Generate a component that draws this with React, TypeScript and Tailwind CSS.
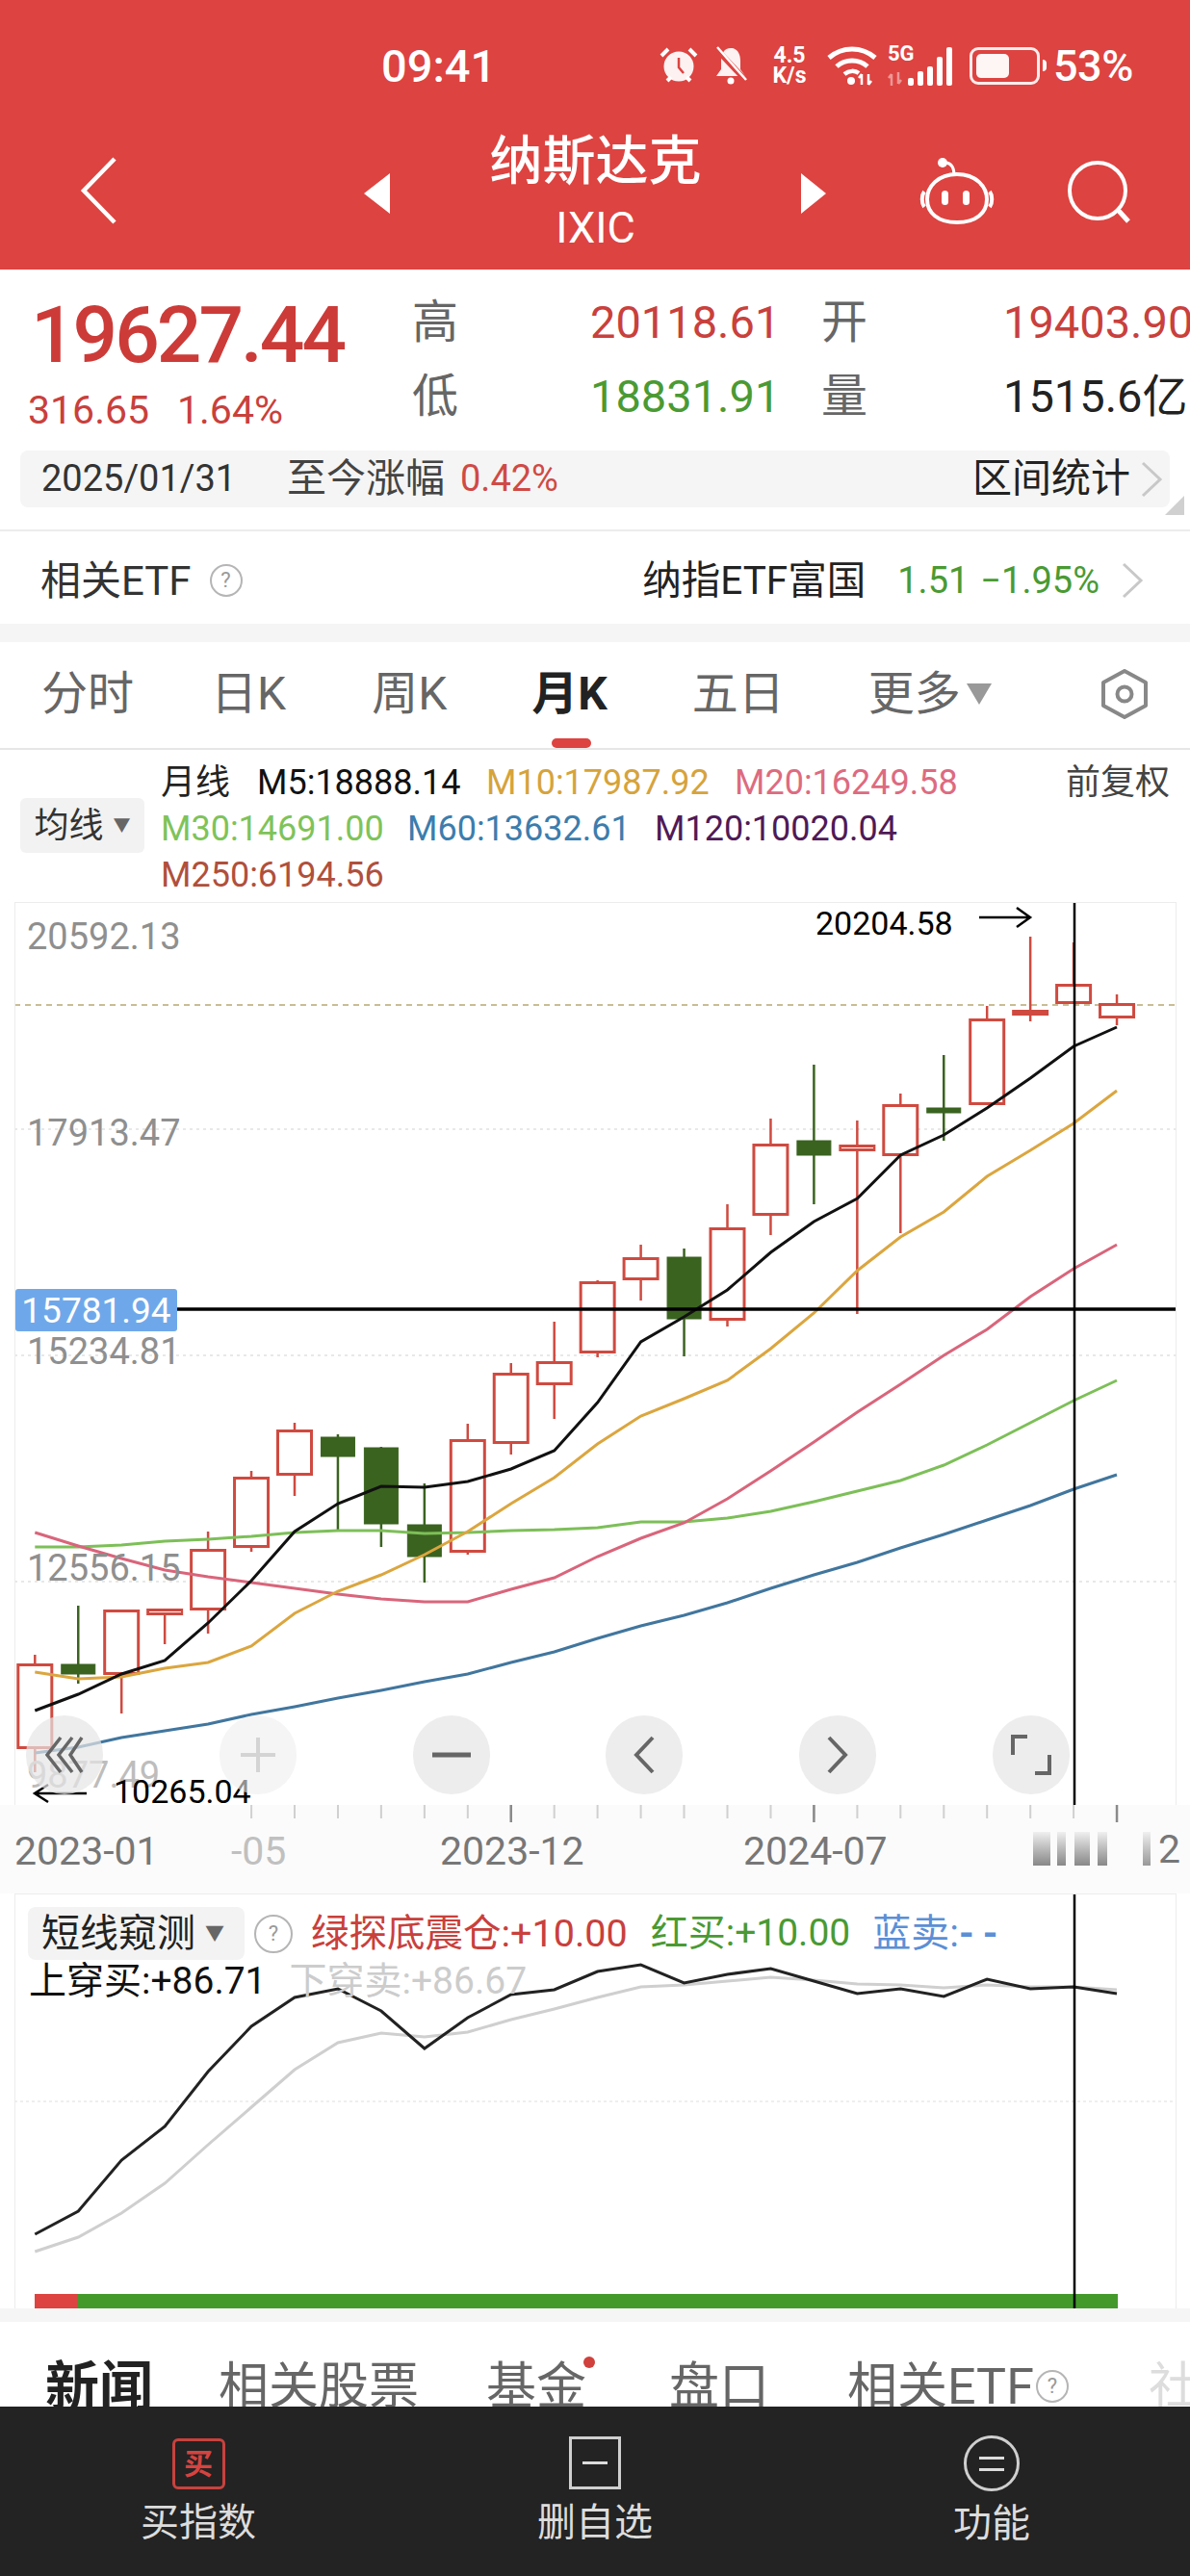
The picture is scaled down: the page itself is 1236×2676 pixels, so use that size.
import React from "react";

const xAt = (i: number) => 36.3 + i * 44.95;
const pts = (ys: number[]) => ys.map((y, i) => `${xAt(i).toFixed(1)},${y}`).join(" ");

// [wickTop, bodyTop, bodyBottom, wickBottom, isRed]
const candles: [number, number, number, number, boolean][] = [
  [1718, 1727, 1816, 1840, true],
  [1667, 1728, 1738, 1748, false],
  [1671, 1671, 1739, 1779, true],
  [1670, 1670, 1677, 1707, true],
  [1590, 1608, 1672, 1696, true],
  [1527, 1533, 1607, 1611, true],
  [1477, 1484, 1532, 1553, true],
  [1489, 1492, 1512, 1588, false],
  [1502, 1503, 1582, 1606, false],
  [1540, 1583, 1616, 1643, false],
  [1478, 1494, 1612, 1614, true],
  [1415, 1425, 1499, 1510, true],
  [1372, 1413, 1438, 1473, true],
  [1329, 1330, 1405, 1409, true],
  [1292, 1305, 1329, 1350, true],
  [1296, 1305, 1369, 1408, false],
  [1250, 1274, 1371, 1377, true],
  [1161, 1187, 1262, 1282, true],
  [1105, 1184, 1199, 1250, false],
  [1163, 1188, 1195, 1364, true],
  [1135, 1146, 1200, 1280, true],
  [1095, 1150, 1155, 1184, false],
  [1044, 1057, 1147, 1147, true],
  [972, 1048, 1054, 1060, true],
  [978, 1021, 1042, 1042, true],
  [1032, 1041, 1057, 1064, true],
];

const ma5 = [1776, 1759, 1738, 1724, 1685, 1641, 1590, 1561, 1543, 1544, 1538, 1525, 1506, 1456, 1393, 1367, 1339, 1300, 1268, 1244, 1199, 1178, 1150, 1119, 1086, 1066];
const ma10 = [1736, 1743, 1741, 1732, 1726, 1709, 1675, 1652, 1635, 1614, 1590, 1561, 1534, 1499, 1470, 1452, 1433, 1400, 1363, 1319, 1284, 1258, 1221, 1194, 1166, 1132];
const ma20 = [1591, 1605, 1618, 1630, 1637, 1643, 1649, 1655, 1660, 1663, 1663, 1650, 1638, 1616, 1597, 1581, 1556, 1527, 1497, 1466, 1437, 1407, 1380, 1346, 1317, 1292];
const ma30 = [1606, 1606, 1604, 1600, 1598, 1595, 1591, 1589, 1589, 1592, 1591, 1589, 1588, 1586, 1580, 1580, 1576, 1569, 1559, 1548, 1537, 1521, 1500, 1477, 1454, 1433];
const ma60 = [1820, 1814, 1804, 1797, 1790, 1780, 1772, 1763, 1755, 1746, 1738, 1726, 1715, 1701, 1688, 1677, 1664, 1649, 1635, 1622, 1607, 1593, 1578, 1563, 1546, 1531];
const oscBlack = [2320, 2296, 2243, 2208, 2151, 2104, 2074, 2065, 2088, 2127, 2095, 2071, 2066, 2047, 2040, 2059, 2050, 2044, 2057, 2070, 2065, 2073, 2055, 2065, 2063, 2070];
const oscGray = [2338, 2323, 2298, 2267, 2227, 2188, 2149, 2121, 2111, 2115, 2110, 2097, 2086, 2074, 2063, 2061, 2057, 2053, 2056, 2060, 2061, 2064, 2061, 2063, 2063, 2066];

const StatusIcons = () => (
  <div className="flex items-center text-white">
    <svg width="42" height="42" viewBox="0 0 42 42">
      <circle cx="21" cy="22" r="15.5" fill="#fff" fillOpacity="0.93" />
      <path d="M21 13v10l5 6" stroke="#dd4340" strokeWidth="2.5" fill="none" />
      <path d="M3 11 10 4M39 11 32 4M9 37l4-4M33 37l-4-4" stroke="#fff" strokeWidth="4" />
    </svg>
    <svg width="38" height="42" viewBox="0 0 38 42" className="ml-[14px]">
      <path d="M19 3c7 0 10 6 10 13v9l5 7H4l5-7v-9C9 9 12 3 19 3Z" fill="#fff" fillOpacity="0.93" />
      <circle cx="19" cy="37" r="3.5" fill="#fff" />
      <path d="M3 3l32 34" stroke="#dd4340" strokeWidth="6" />
      <path d="M5 2l30 34" stroke="#fff" strokeWidth="2.5" />
    </svg>
    <div className="ml-[20px] flex w-[44px] flex-col items-center text-[23px] font-bold leading-[21px]">
      <span>4.5</span>
      <span>K/s</span>
    </div>
    <svg width="52" height="42" viewBox="0 0 52 42" className="ml-[17px]">
      <path d="M2 13C16 1 36 1 50 13" stroke="#fff" strokeWidth="5" fill="none" />
      <path d="M10 22C19 14 33 14 42 22" stroke="#fff" strokeWidth="5" fill="none" />
      <path d="M18 30c5-4 11-4 15-1" stroke="#fff" strokeWidth="4.5" fill="none" />
      <circle cx="25" cy="37" r="4" fill="#fff" />
      <path d="M36 30v11M33 34l3-4M43 30v11M46 37l-3 4" stroke="#fff" strokeWidth="2.5" fill="none" />
    </svg>
    <div className="relative ml-[11px] flex h-[42px] w-[67px] items-end justify-end gap-[4px]">
      <span className="absolute left-0 top-[-3px] text-[22px] font-bold leading-[24px]">5G</span>
      <svg width="16" height="14" viewBox="0 0 16 14" className="absolute bottom-0 left-0">
        <path d="M4 14V2M1 6l3-4M11 0V12M14 8l-3 4" stroke="#fff" strokeOpacity="0.45" strokeWidth="2.5" fill="none" />
      </svg>
      <div className="h-[8px] w-[6px] rounded-[2px] bg-white" />
      <div className="h-[15px] w-[6px] rounded-[2px] bg-white" />
      <div className="h-[20px] w-[6px] rounded-[2px] bg-white" />
      <div className="h-[30px] w-[6px] rounded-[2px] bg-white" />
      <div className="h-[40px] w-[6px] rounded-[2px] bg-white" />
    </div>
    <div className="ml-[18px] flex h-[39px] w-[73px] items-center rounded-[9px] border-[3px] border-white/90 p-[4px]">
      <div className="h-full w-[34px] rounded-[5px] bg-white/95" />
    </div>
    <div className="ml-[3px] h-[12px] w-[4px] rounded-r bg-white" />
    <span className="ml-[7px] text-[45px] font-medium leading-none tracking-[-0.5px]">53%</span>
  </div>
);

const Robot = () => (
  <svg width="78" height="72" viewBox="0 0 78 72" className="ml-[97px]">
    <circle cx="24" cy="6" r="5" fill="#fff" />
    <path d="M28 6c6 1 8 6 8 13" stroke="#fff" strokeWidth="3" fill="none" />
    <path d="M39 18c20 0 31 13 31 26 0 14-11 24-31 24S8 58 8 44c0-13 11-26 31-26Z" stroke="#fff" strokeWidth="4" fill="none" />
    <path d="M5 36c-3 4-3 12 0 16M73 36c3 4 3 12 0 16" stroke="#fff" strokeWidth="4" fill="none" />
    <rect x="23" y="35" width="7" height="15" rx="3.5" fill="#fff" />
    <rect x="45" y="35" width="7" height="15" rx="3.5" fill="#fff" />
  </svg>
);

const Chevron = ({ className }: { className: string }) => (
  <svg width="24" height="38" viewBox="0 0 24 38" className={className}>
    <path d="M3 2 21 19 3 36" stroke="#c8c8c8" strokeWidth="3" fill="none" />
  </svg>
);

const Help = ({ className }: { className: string }) => (
  <span className={`flex h-[34px] w-[34px] shrink-0 items-center justify-center rounded-full border-2 border-[#b5b5b5] text-[22px] leading-none text-[#9a9a9a] ${className}`}>?</span>
);

const Candles = () => (
  <>
    {candles.map(([wt, bt, bb, wb, red], i) => {
      const x = xAt(i);
      const c = red ? "#cf4a40" : "#3b6320";
      return (
        <g key={i}>
          <path d={`M${x} ${wt}V${bt}M${x} ${bb}V${wb}`} stroke={c} strokeWidth="2.5" />
          <rect x={x - 17.5} y={bt + (red ? 1.5 : 0)} width="35" height={bb - bt - (red ? 3 : 0)} fill={red ? "#fff" : c} stroke={c} strokeWidth={red ? 3 : 1} />
        </g>
      );
    })}
  </>
);

const PriceLabel = ({ text, className }: { text: string; className: string }) => (
  <span className={`absolute left-[12px] text-[38px] leading-[44px] text-[#8f8f8f] ${className}`}>{text}</span>
);

const RoundButton = ({ children, className = "" }: { children: React.ReactNode; className?: string }) => (
  <div className={`flex h-[82px] w-[80px] items-center justify-center rounded-full bg-[#e6e6e6]/70 ${className}`}>{children}</div>
);

const KChart = () => (
  <div className="relative ml-[15px] h-[938px] w-[1207px] overflow-hidden border-x border-t border-[#ececec] bg-white">
    <svg width="1207" height="938" viewBox="16 937 1207 938" className="absolute left-0 top-0">
      <path d="M15 1043H1222" stroke="#c9bd94" strokeWidth="2" strokeDasharray="6 5" />
      <path d="M15 1172H1222M15 1407H1222M15 1642H1222" stroke="#e8e8e8" strokeWidth="2" strokeDasharray="3 4" />
      <Candles />
      <polyline points={pts(ma60)} fill="none" stroke="#41769e" strokeWidth="3" />
      <polyline points={pts(ma30)} fill="none" stroke="#7dbf58" strokeWidth="3" />
      <polyline points={pts(ma20)} fill="none" stroke="#d9657b" strokeWidth="3" />
      <polyline points={pts(ma10)} fill="none" stroke="#dba63f" strokeWidth="3" />
      <polyline points={pts(ma5)} fill="none" stroke="#111" strokeWidth="3" />
      <path d="M1116 937V1875" stroke="#000" strokeWidth="2.5" />
      <path d="M183 1359H1222" stroke="#000" strokeWidth="3.5" />
      <path d="M1017 952H1070M1056 942l14 10-14 10" stroke="#000" strokeWidth="2.5" fill="none" />
      <path d="M90 1862H38M50 1853l-14 9 14 9" stroke="#000" strokeWidth="2.5" fill="none" />
    </svg>
    <PriceLabel text="20592.13" className="top-[13px]" />
    <PriceLabel text="17913.47" className="top-[217px]" />
    <PriceLabel text="15234.81" className="top-[444px]" />
    <PriceLabel text="12556.15" className="top-[669px]" />
    <PriceLabel text="9877.49" className="top-[884px] text-[#bdbdbd]" />
    <span className="absolute left-[831px] top-[2px] text-[34px] leading-[38px] text-black">20204.58</span>
    <span className="absolute left-[102px] top-[904px] text-[34px] leading-[38px] text-black">10265.04</span>
    <span className="absolute left-0 top-[401px] flex h-[44px] w-[168px] items-center justify-center rounded-[3px] bg-[#6fa8ea] text-[37px] leading-none text-white">15781.94</span>
    <div className="absolute left-[11px] right-[110px] top-[844px] flex justify-between">
      <RoundButton>
        <svg width="48" height="48" viewBox="0 0 48 48"><path d="M20 6 6 24l14 18M32 6 18 24l14 18M42 6 30 24l12 18" stroke="#666" strokeWidth="3.5" fill="none" /></svg>
      </RoundButton>
      <RoundButton className="bg-[#eeeeee]/60">
        <svg width="40" height="40" viewBox="0 0 40 40"><path d="M20 2V38M2 20H38" stroke="#d4d4d4" strokeWidth="4" /></svg>
      </RoundButton>
      <RoundButton>
        <svg width="40" height="8" viewBox="0 0 40 8"><path d="M0 4H40" stroke="#666" strokeWidth="5" /></svg>
      </RoundButton>
      <RoundButton>
        <svg width="22" height="40" viewBox="0 0 22 40"><path d="M20 2 3 20l17 18" stroke="#666" strokeWidth="4" fill="none" /></svg>
      </RoundButton>
      <RoundButton>
        <svg width="22" height="40" viewBox="0 0 22 40"><path d="M2 2l17 18L2 38" stroke="#666" strokeWidth="4" fill="none" /></svg>
      </RoundButton>
      <RoundButton>
        <svg width="44" height="44" viewBox="0 0 44 44"><path d="M18 3H3V22M26 41H41V22" stroke="#666" strokeWidth="4" fill="none" /></svg>
      </RoundButton>
    </div>
  </div>
);

const TimeAxis = () => (
  <div className="relative h-[92px] bg-[#fbfbfb]">
    <svg width="1236" height="20" viewBox="0 0 1236 20" className="absolute left-0 top-0">
      <path d={Array.from({ length: 21 }, (_, k) => `M${xAt(k + 5).toFixed(1)} 0V14`).join("")} stroke="#d0d0d0" strokeWidth="2" />
      <path d={`M${xAt(11)} 0V18M${xAt(18)} 0V18M${xAt(25)} 0V18`} stroke="#8a8a8a" strokeWidth="2.5" />
    </svg>
    <div className="flex pl-[15px] pt-[26px] text-[41px] leading-[44px] text-[#777]">
      <span className="w-[225px]">2023-01</span>
      <span className="w-[217px] text-[#c0c0c0]">-05</span>
      <span className="w-[315px]">2023-12</span>
      <span className="w-[301px]">2024-07</span>
      <div className="mt-[2px] flex h-[35px] items-stretch">
        <div className="w-[18px] bg-gradient-to-b from-[#f0f0f0] to-[#888]" />
        <div className="ml-[7px] w-[9px] bg-gradient-to-b from-[#f0f0f0] to-[#888]" />
        <div className="ml-[9px] w-[16px] bg-gradient-to-b from-[#f0f0f0] to-[#888]" />
        <div className="ml-[8px] w-[10px] bg-gradient-to-b from-[#f0f0f0] to-[#888]" />
        <div className="ml-[37px] w-[8px] bg-gradient-to-b from-[#f0f0f0] to-[#999]" />
      </div>
      <span className="ml-[8px] -translate-y-[2px]">2</span>
    </div>
  </div>
);

const OscPanel = () => (
  <div className="relative ml-[15px] h-[431px] w-[1207px] overflow-hidden border-x border-t border-[#ececec] bg-white">
    <svg width="1207" height="431" viewBox="16 1967 1207 431" className="absolute left-0 top-0">
      <path d="M15 2182H1222" stroke="#dddddd" strokeWidth="1" strokeDasharray="3 3" />
      <polyline points={pts(oscGray)} fill="none" stroke="#cfcfcf" strokeWidth="3" />
      <polyline points={pts(oscBlack)} fill="none" stroke="#222" strokeWidth="3" />
      <rect x="36" y="2382" width="45" height="16" fill="#dd4340" />
      <rect x="81" y="2382" width="1080" height="16" fill="#439a2b" />
      <path d="M1116 1967V2398" stroke="#000" strokeWidth="2.5" />
    </svg>
    <div className="relative flex items-start pl-[13px] pt-[13px]">
      <div className="flex h-[55px] w-[225px] items-center rounded-lg bg-[#f3f3f3] pl-[14px] text-[40px] leading-none text-[#222]">
        短线窥测
        <span className="ml-[10px] text-[20px] text-[#666]">▼</span>
      </div>
      <Help className="ml-[10px] mt-[8px] h-[40px] w-[40px]" />
      <span className="ml-[19px] text-[39.5px] leading-[55px] text-[#c9403c]">绿探底震仓:+10.00</span>
      <span className="ml-[24px] text-[39px] leading-[55px] text-[#4a9a33]">红买:+10.00</span>
      <span className="ml-[23px] text-[40px] leading-[55px] text-[#5b8fd6]">
        蓝卖:<span className="font-bold tracking-[9px]">--</span>
      </span>
    </div>
    <div className="relative flex pl-[14px] text-[39px] leading-[44px]">
      <span className="text-[#111]">上穿买:+86.71</span>
      <span className="ml-[24px] text-[#cccccc]">下穿卖:+86.67</span>
    </div>
  </div>
);

export default function App() {
  return (
    <div className="h-[2676px] w-[1236px] overflow-hidden bg-white font-[Roboto,'Noto_Sans_CJK_SC',sans-serif]">
      {/* header */}
      <div className="h-[280px] bg-[#dd4340] text-white">
        <div className="flex h-[136px] items-center">
          <span className="ml-[396px] w-[288px] text-[47px] font-medium leading-none">09:41</span>
          <StatusIcons />
        </div>
        <div className="flex h-[144px] items-start">
          <svg width="44" height="72" viewBox="0 0 44 72" className="ml-[81px] mt-[26px]">
            <path d="M38 3 6 36l32 33" stroke="#fff" strokeWidth="4.5" fill="none" />
          </svg>
          <div className="ml-[253px] mt-[44px] h-0 w-0 border-y-[21px] border-r-[27px] border-y-transparent border-r-white" />
          <div className="flex w-[427px] flex-col items-center">
            <span className="text-[55px] font-medium leading-[62px]">纳斯达克</span>
            <span className="mt-[14px] text-[45px] leading-[50px]">IXIC</span>
          </div>
          <div className="mt-[44px] h-0 w-0 border-y-[21px] border-l-[26px] border-y-transparent border-l-white" />
          <div className="mt-[27px]">
            <Robot />
          </div>
          <svg width="66" height="68" viewBox="0 0 66 68" className="ml-[75px] mt-[30px]">
            <circle cx="32" cy="32" r="29" stroke="#fff" strokeWidth="4" fill="none" />
            <path d="M54 53l10 11" stroke="#fff" strokeWidth="5" />
          </svg>
        </div>
      </div>

      {/* quote */}
      <div className="flex h-[188px]">
        <div className="w-[428px] pl-[32px] pt-[16px]">
          <div className="text-[82px] font-medium leading-[104px] tracking-[-3px] text-[#cc3b38]">19627.44</div>
          <div className="flex pt-[3px] text-[41px] leading-[46px] text-[#c9403c]">
            <span className="-ml-[3px] w-[155px]">316.65</span>
            <span>1.64%</span>
          </div>
        </div>
        <div className="grid h-[170px] flex-1 grid-cols-[185px_240px_189px_194px] grid-rows-2 pt-[16px] text-[47px] leading-[77px]">
          <span className="text-[48px] text-[#666]">高</span>
          <span className="text-[#c9403c]">20118.61</span>
          <span className="text-[48px] text-[#666]">开</span>
          <span className="whitespace-nowrap text-[#c9403c]">19403.90</span>
          <span className="text-[48px] text-[#666]">低</span>
          <span className="text-[#4a9a33]">18831.91</span>
          <span className="text-[48px] text-[#666]">量</span>
          <span className="whitespace-nowrap text-[#222]">1515.6亿</span>
        </div>
      </div>

      <div className="relative mx-[21px] flex h-[59px] items-center rounded-lg bg-[#f5f5f5] pl-[22px] pr-[7px] text-[38px]">
        <span className="w-[255px] text-[#333]">2025/01/31</span>
        <span className="text-[41px] text-[#444]">至今涨幅</span>
        <span className="ml-[16px] text-[#cf4a46]">0.42%</span>
        <span className="ml-auto text-[41px] text-[#222]">区间统计</span>
        <Chevron className="ml-[10px]" />
        <div className="absolute -right-[15px] bottom-[-8px] h-0 w-0 border-b-[20px] border-l-[20px] border-b-[#d0d0d0] border-l-transparent" />
      </div>

      <div className="mt-[23px] flex h-[98px] items-center border-t-2 border-[#ececec] pl-[42px] pr-[48px] pt-[6px]">
        <span className="text-[42px] text-[#333]">相关ETF</span>
        <Help className="ml-[19px]" />
        <span className="ml-auto text-[40.5px] text-[#222]">纳指ETF富国</span>
        <span className="ml-[33px] text-[38px] text-[#4a9a33]">1.51</span>
        <span className="ml-[12px] text-[38px] text-[#4a9a33]">−1.95%</span>
        <Chevron className="ml-[22px]" />
      </div>

      <div className="h-[19px] bg-[#f5f5f5]" />

      {/* period tabs */}
      <div className="relative flex h-[112px] items-center border-b-2 border-[#e6e6e6] pb-[2px] text-[48px] text-[#666]">
        <span className="ml-[43px]">分时</span>
        <span className="ml-[80px]">日K</span>
        <span className="ml-[89px]">周K</span>
        <span className="ml-[88px] font-bold text-[#222]">月K</span>
        <span className="ml-[88px]">五日</span>
        <span className="ml-[87px]">更多</span>
        <div className="ml-[6px] h-0 w-0 border-x-[13px] border-t-[22px] border-x-transparent border-t-[#999]" />
        <svg width="54" height="54" viewBox="0 0 54 54" className="ml-[111px]">
          <path d="M27 3 49 15V39L27 51 5 39V15Z" stroke="#888" strokeWidth="4" fill="none" strokeLinejoin="round" />
          <circle cx="27" cy="27" r="7.5" stroke="#888" strokeWidth="4" fill="none" />
        </svg>
        <div className="absolute bottom-0 left-[573px] h-[10px] w-[41px] rounded-full bg-[#dd4340]" />
      </div>

      {/* moving average legend */}
      <div className="flex h-[158px]">
        <div className="w-[167px] pl-[21px] pt-[50px]">
          <div className="flex h-[57px] w-[129px] items-center justify-center rounded-md bg-[#f2f2f2] text-[36px] leading-none text-[#333]">
            均线<span className="ml-[10px] text-[18px] text-[#666]">▼</span>
          </div>
        </div>
        <div className="flex-1 pt-[10px] text-[36px] leading-[48px]">
          <div className="flex pr-[21px]">
            <span className="w-[100px] text-[#222]">月线</span>
            <span className="w-[238px] text-[#111]">M5:18888.14</span>
            <span className="w-[258px] text-[#d6a33c]">M10:17987.92</span>
            <span className="text-[#dd6b80]">M20:16249.58</span>
            <span className="ml-auto text-[#444]">前复权</span>
          </div>
          <div className="flex">
            <span className="w-[256px] text-[#7ec35a]">M30:14691.00</span>
            <span className="w-[257px] text-[#3c7dad]">M60:13632.61</span>
            <span className="text-[#4f1a57]">M120:10020.04</span>
          </div>
          <div className="text-[#b0503c]">M250:6194.56</div>
        </div>
      </div>

      <KChart />
      <TimeAxis />
      <OscPanel />

      <div className="h-[14px] bg-[#f5f5f5]" />

      {/* news tabs */}
      <div className="flex h-[88px] overflow-hidden whitespace-nowrap pt-[38px] text-[52px] leading-[60px] text-[#666]">
        <span className="ml-[47px] shrink-0 text-[56px] font-bold text-[#222]">新闻</span>
        <span className="ml-[68px] shrink-0">相关股票</span>
        <span className="relative ml-[70px] shrink-0">
          基金
          <span className="absolute -right-[9px] top-[-2px] h-[12px] w-[12px] rounded-full bg-[#d0403c]" />
        </span>
        <span className="ml-[86px] shrink-0">盘口</span>
        <span className="ml-[81px] shrink-0">相关ETF</span>
        <Help className="ml-[2px] mt-[12px]" />
        <span className="ml-[83px] shrink-0 text-[#dddddd]">社</span>
      </div>

      {/* bottom bar */}
      <div className="grid h-[176px] grid-cols-3 bg-[#232323] text-[40px] leading-[46px] text-[#dcdcdc]">
        <div className="flex flex-col items-center pt-[33px]">
          <div className="flex h-[53px] w-[55px] items-center justify-center rounded-md border-[3px] border-[#c8423e] text-[30px] font-bold leading-none text-[#d64340]">买</div>
          <span className="mt-[12px]">买指数</span>
        </div>
        <div className="flex flex-col items-center pt-[31px]">
          <div className="flex h-[55px] w-[54px] items-center justify-center border-[3px] border-[#cfcfcf]">
            <div className="h-[3px] w-[26px] bg-[#dcdcdc]" />
          </div>
          <span className="mt-[12px]">删自选</span>
        </div>
        <div className="flex flex-col items-center pt-[30px]">
          <div className="flex h-[58px] w-[58px] flex-col items-center justify-center gap-[9px] rounded-full border-[3px] border-[#cfcfcf]">
            <div className="h-[3px] w-[26px] bg-[#dcdcdc]" />
            <div className="h-[3px] w-[26px] bg-[#dcdcdc]" />
          </div>
          <span className="mt-[11px]">功能</span>
        </div>
      </div>
    </div>
  );
}
